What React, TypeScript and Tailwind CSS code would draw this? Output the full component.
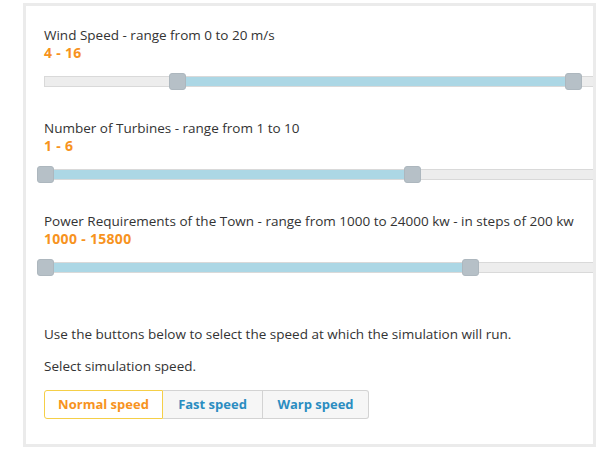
import React from "react";

interface SliderProps {
  label: string;
  min: number;
  max: number;
  values: [number, number];
}

function RangeSlider({ label, min, max, values }: SliderProps) {
  const lo = ((values[0] - min) / (max - min)) * 100;
  const hi = ((values[1] - min) / (max - min)) * 100;

  return (
    <div>
      <p className="text-[13.5px] leading-[18px] text-[#333]">{label}</p>
      <p className="text-[14px] font-bold leading-[18px] tracking-[0.3px] text-[#f7931e]">
        {values[0]} - {values[1]}
      </p>
      <div className="relative mt-[14px] h-[11px] w-[663px] border border-[#d9d9d9] bg-[#ededed]">
        <div className="absolute top-0 h-full bg-[#acd7e5]" style={{ left: `${lo}%`, width: `${hi - lo}%` }} />
        <span
          className="absolute top-[-4px] -ml-[8.5px] h-[17px] w-[17px] rounded-[3px] border border-[#adb7be] bg-[#b6c0c7]"
          style={{ left: `${lo}%` }}
        />
        <span
          className="absolute top-[-4px] -ml-[8.5px] h-[17px] w-[17px] rounded-[3px] border border-[#adb7be] bg-[#b6c0c7]"
          style={{ left: `${hi}%` }}
        />
      </div>
    </div>
  );
}

export default function App() {
  return (
    <div className="h-[450px] w-[600px] bg-white pl-[23px] pt-[3px]" style={{ fontFamily: '"Open Sans", sans-serif' }}>
      <div className="h-[444px] w-[573px] overflow-hidden border-[3px] border-[#ebebeb] bg-white pl-[18px] pt-[20px]">
        <div className="flex flex-col gap-[32px]">
          <RangeSlider label="Wind Speed - range from 0 to 20 m/s" min={0} max={20} values={[4, 16]} />
          <RangeSlider label="Number of Turbines - range from 1 to 10" min={1} max={10} values={[1, 6]} />
          <RangeSlider
            label="Power Requirements of the Town - range from 1000 to 24000 kw - in steps of 200 kw"
            min={1000}
            max={24000}
            values={[1000, 15800]}
          />
        </div>

        <p className="mt-[52px] text-[13.5px] leading-[18px] text-[#333]">
          Use the buttons below to select the speed at which the simulation will run.
        </p>
        <p className="mt-[14px] text-[13.5px] leading-[18px] text-[#333]">Select simulation speed.</p>

        <div className="mt-[15px] flex text-[13px] font-bold">
          <button className="h-[29px] w-[119px] rounded-l-[3px] border border-[#f5cf48] bg-white text-[#f7931e]">
            Normal speed
          </button>
          <button className="h-[29px] w-[100px] border border-l-0 border-[#d3d3d3] bg-[#f6f6f6] text-[#2b8dc1]">
            Fast speed
          </button>
          <button className="h-[29px] w-[106px] rounded-r-[3px] border border-l-0 border-[#d3d3d3] bg-[#f6f6f6] text-[#2b8dc1]">
            Warp speed
          </button>
        </div>
      </div>
    </div>
  );
}
